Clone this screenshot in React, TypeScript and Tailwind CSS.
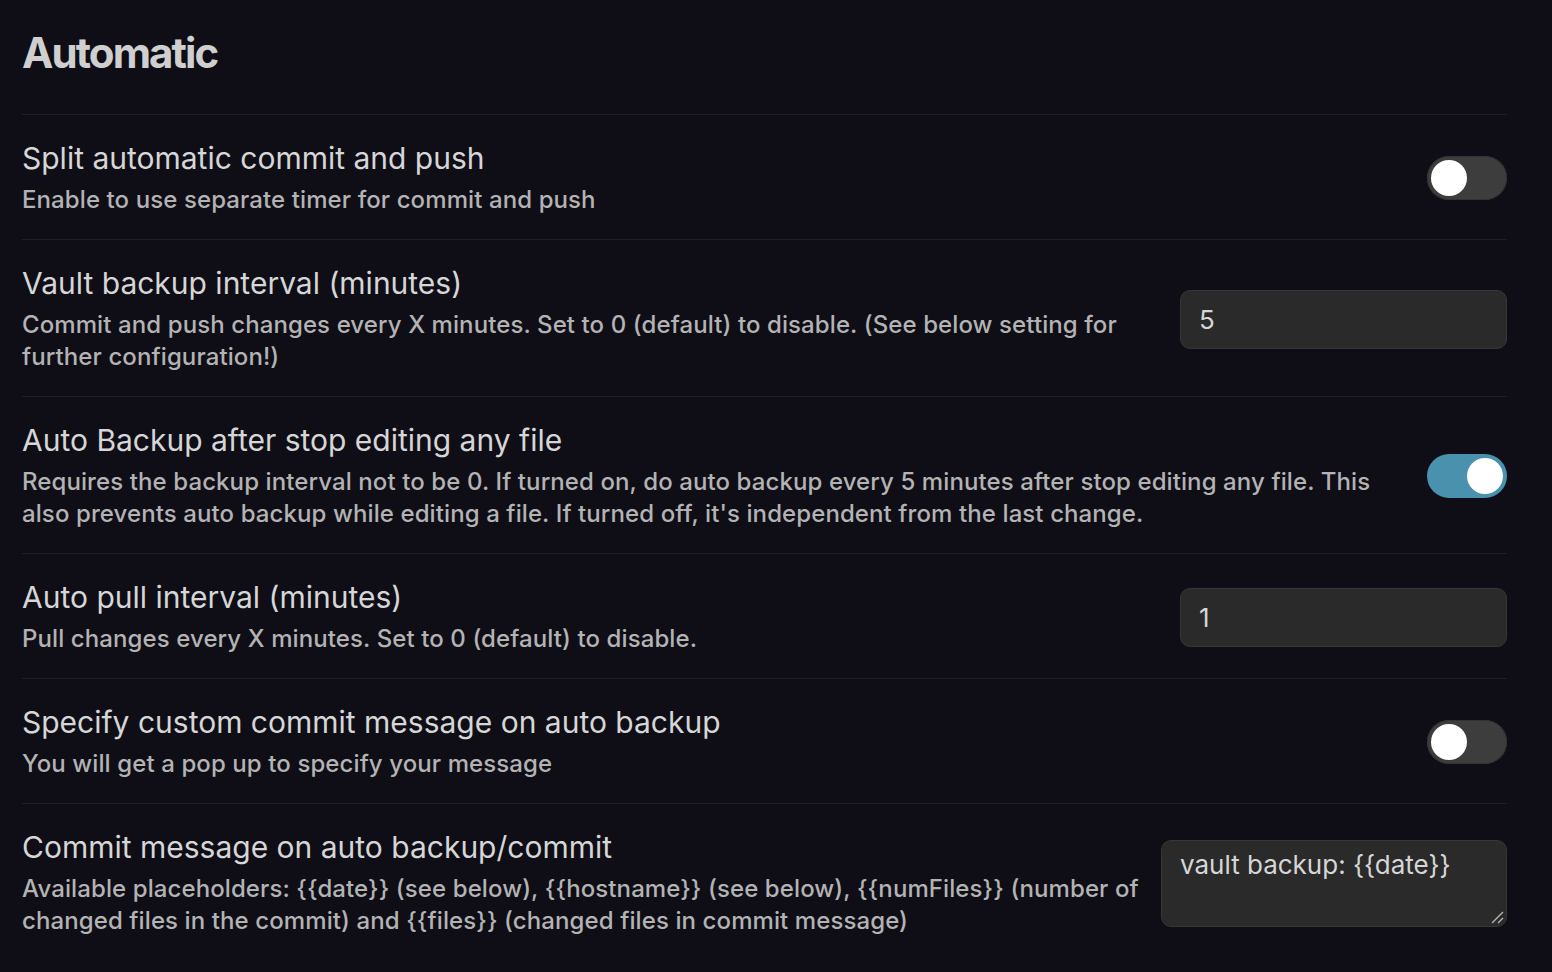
import { useState } from "react";

interface ToggleProps {
  on: boolean;
  onChange: (v: boolean) => void;
}

const Toggle: React.FC<ToggleProps> = ({ on, onChange }) => (
  <button
    onClick={() => onChange(!on)}
    className={`relative h-[44px] w-[80px] shrink-0 rounded-full transition-colors ${
      on ? "bg-[#4a91ad]" : "bg-[#3d3d3d] shadow-[inset_0_0_0_1px_#333]"
    }`}
  >
    <span
      className={`absolute top-[4px] h-[36px] w-[36px] rounded-full bg-white transition-all ${
        on ? "left-[40px]" : "left-[4px]"
      }`}
    />
  </button>
);

interface SettingProps {
  name: string;
  desc: string;
  children: React.ReactNode;
}

const Setting: React.FC<SettingProps> = ({ name, desc, children }) => (
  <div className="flex items-center border-t border-[#1d1e28] pb-[23px] pt-[25px]">
    <div className="mr-4 flex-1">
      <div className="text-[30px] leading-[36px] text-[#d6d6d6]">{name}</div>
      <div className="mt-2 text-[24px] font-medium leading-[32px] tracking-[0.004em] text-[#b3b3b3]">
        {desc}
      </div>
    </div>
    <div className="flex shrink-0 justify-end">{children}</div>
  </div>
);

const App: React.FC = () => {
  const [split, setSplit] = useState(false);
  const [afterStop, setAfterStop] = useState(true);
  const [customMsg, setCustomMsg] = useState(false);
  const [interval, setInterval] = useState("5");
  const [pull, setPull] = useState("1");
  const [message, setMessage] = useState("vault backup: {{date}}");

  return (
    <div
      className="min-h-screen bg-[#0f0e17] pl-[22px] pr-[45px]"
      style={{ fontFamily: "Inter, 'Noto Sans', sans-serif" }}
    >
      <h1 className="pb-[35px] pt-[27px] text-[42px] font-bold leading-[52px] tracking-[-0.045em] text-[#cfcfcf]">
        Automatic
      </h1>

      <Setting
        name="Split automatic commit and push"
        desc="Enable to use separate timer for commit and push"
      >
        <Toggle on={split} onChange={setSplit} />
      </Setting>

      <Setting
        name="Vault backup interval (minutes)"
        desc="Commit and push changes every X minutes. Set to 0 (default) to disable. (See below setting for further configuration!)"
      >
        <input
          value={interval}
          onChange={(e) => setInterval(e.target.value)}
          className="h-[59px] w-[327px] rounded-[10px] border border-[#363636] bg-[#2a2a2a] px-[18px] text-[26px] text-[#d6d6d6] outline-none"
        />
      </Setting>

      <Setting
        name="Auto Backup after stop editing any file"
        desc="Requires the backup interval not to be 0. If turned on, do auto backup every 5 minutes after stop editing any file. This also prevents auto backup while editing a file. If turned off, it's independent from the last change."
      >
        <Toggle on={afterStop} onChange={setAfterStop} />
      </Setting>

      <Setting
        name="Auto pull interval (minutes)"
        desc="Pull changes every X minutes. Set to 0 (default) to disable."
      >
        <input
          value={pull}
          onChange={(e) => setPull(e.target.value)}
          className="h-[59px] w-[327px] rounded-[10px] border border-[#363636] bg-[#2a2a2a] px-[18px] text-[26px] text-[#d6d6d6] outline-none"
        />
      </Setting>

      <Setting
        name="Specify custom commit message on auto backup"
        desc="You will get a pop up to specify your message"
      >
        <Toggle on={customMsg} onChange={setCustomMsg} />
      </Setting>

      <Setting
        name="Commit message on auto backup/commit"
        desc="Available placeholders: {{date}} (see below), {{hostname}} (see below), {{numFiles}} (number of changed files in the commit) and {{files}} (changed files in commit message)"
      >
        <div className="relative">
          <textarea
            value={message}
            onChange={(e) => setMessage(e.target.value)}
            className="block h-[87px] w-[346px] resize-none rounded-[10px] border border-[#363636] bg-[#2a2a2a] px-[18px] py-[7px] text-[26px] leading-[34px] text-[#d6d6d6] outline-none"
          />
          {/* resize grip */}
          <svg
            className="pointer-events-none absolute bottom-[3px] right-[3px]"
            width="14"
            height="14"
            viewBox="0 0 14 14"
          >
            <path d="M2 13 L13 2" stroke="#b0b0b0" strokeWidth="1.5" />
            <path d="M8 13 L13 8" stroke="#b0b0b0" strokeWidth="1.5" />
          </svg>
        </div>
      </Setting>
    </div>
  );
};

export default App;
